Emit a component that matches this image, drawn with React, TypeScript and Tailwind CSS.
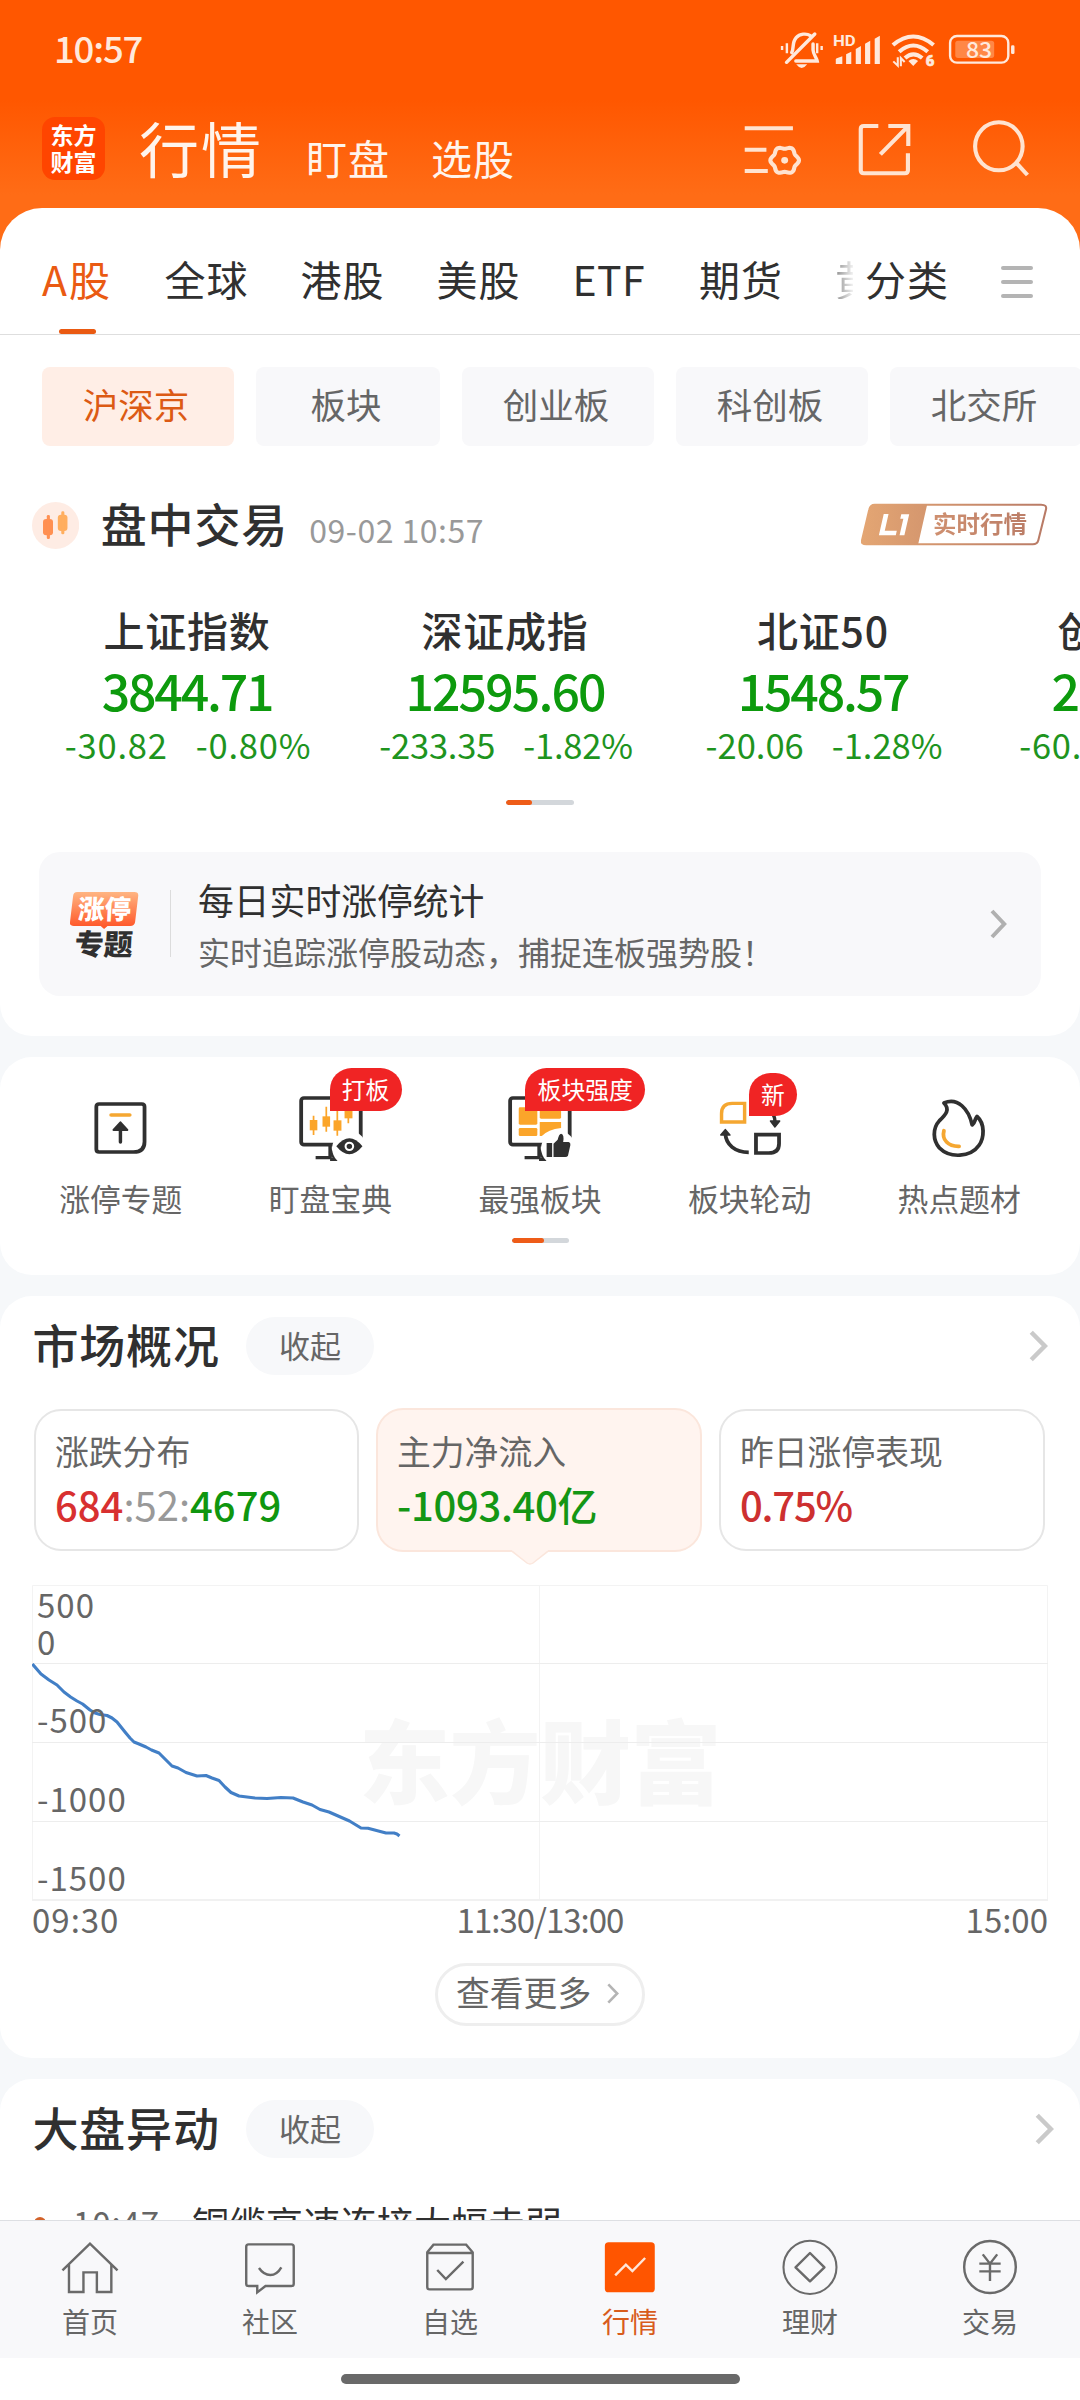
import React from "react";

const INK = "#303030";
const AMBER = "#f5a731";

type BoxProps = { x: number; y: number; w: number; h: number; className?: string; children: React.ReactNode };

/* Icons are drawn on a grid of 2.904 units per pixel across and 3 units per pixel down. */
function Glyph({ x, y, w, h, className = "", children }: BoxProps) {
  return (
    <svg
      className={"block shrink-0 " + className}
      width={w / 2.904}
      height={h / 3}
      viewBox={`${x} ${y} ${w} ${h}`}
      preserveAspectRatio="none"
      fill="none"
    >
      {children}
    </svg>
  );
}

const gearPath =
  Array.from({ length: 73 }, (_, i) => {
    const a = (i * 5 * Math.PI) / 180;
    const r = 38 + 3.5 * Math.cos(6 * a);
    return `${i ? "L" : "M"}${(711 + r * Math.cos(a)).toFixed(1)} ${(479 + r * Math.sin(a)).toFixed(1)}`;
  }).join("") + "Z";

function StatusBar() {
  return (
    <div className="flex h-[100px] items-start pl-[54px] text-[#ffe9dc]">
      <span className="mt-[30px] w-[726px] text-[36.5px] leading-none font-medium tracking-[-1.2px]">10:57</span>
      <Glyph x={695} y={90} w={690} h={120} className="mt-[30px]">
        <g stroke="#ffe9dc" strokeWidth="10" strokeLinecap="round">
          <path d="M729 158C736 146 729 128 742 113C752 101 772 99 783 107" />
          <path d="M791 132V150C792 165 801 172 803 183H741" />
          <path d="M796 102L714 187" />
        </g>
        <path d="M742 193H774Q766 204 758 204Q750 204 742 193Z" fill="#ffe9dc" />
        <path d="M701 138V150M715 130V160M803 130V160M816 138V150" stroke="#ffe9dc" strokeWidth="7" />
        <g fill="#ffe9dc">
          <text x="849" y="137" fontSize="44" fontWeight="700" textLength="66" lengthAdjust="spacingAndGlyphs" fontFamily="Roboto, sans-serif">
            HD
          </text>
          <path d="M857 192V178Q857 176 860 175L876 169V192ZM887 192V163L902 155V192ZM915 192V147L930 138V192ZM942 192V131L957 122V192ZM970 192V116L985 107V192Z" />
        </g>
        <g stroke="#ffe9dc" strokeWidth="12">
          <path d="M1023 135Q1082 84 1141 135" />
          <path d="M1041 155Q1082 118 1124 155" />
          <path d="M1058 174Q1082 152 1108 174" />
        </g>
        <path d="M1068 183Q1082 171 1096 183L1082 198Z" fill="#ffe9dc" />
        <path d="M1037 172V197L1024 184M1046 199V174L1057 186" stroke="#ffe9dc" strokeWidth="6" />
        <text x="1118" y="199" fontSize="43" fontWeight="900" fill="#ffe9dc" stroke="#ffe9dc" strokeWidth="2" fontFamily="Roboto, sans-serif">
          6
        </text>
        <rect x="1189" y="108" width="169" height="80" rx="20" stroke="#ffe9dc" strokeWidth="7" />
        <rect x="1204" y="122" width="113" height="52" rx="8" fill="#ff8746" />
        <rect x="1366" y="136" width="10" height="26" rx="4" fill="#ffe9dc" />
        <text x="1273" y="174" textAnchor="middle" fontSize="67" fontWeight="500" fill="#ffe9dc" fontFamily="Noto Sans CJK SC, sans-serif">
          83
        </text>
      </Glyph>
    </div>
  );
}

function Header() {
  return (
    <header className="h-[250px] bg-[linear-gradient(#ff5700_0,#ff5700_100px,#ff6c16_195px,#ff6c16_100%)]">
      <StatusBar />
      <div className="flex items-start pl-[42px] text-[#fff4ec]">
        <div className="mt-[17px] flex h-[63px] w-[63px] flex-col items-center justify-center rounded-[13px] bg-[#ff4500] pb-[2px] text-[23px] leading-[27px] font-bold text-white">
          <span>东方</span>
          <span>财富</span>
        </div>
        <span className="mt-[17px] ml-[34px] w-[167px] text-[60px] leading-none tracking-[2px]">行情</span>
        <span className="mt-[37px] w-[125px] text-[41px] leading-none tracking-[1px]">盯盘</span>
        <span className="mt-[37px] w-[312px] text-[41px] leading-none tracking-[1px]">选股</span>
        <Glyph x={590} y={370} w={175} h={160} className="mt-[24px]">
          <path d="M595 383H735M595 447H658M595 511H662" stroke="#ffe3d0" strokeWidth="12" />
          <path d={gearPath} stroke="#ffe3d0" strokeWidth="12" />
          <circle cx="711" cy="479" r="10" fill="#ffe3d0" />
        </Glyph>
        <Glyph x={925} y={364} w={158} h={166} className="mt-[22px] ml-[55px]">
          <path
            d="M984 376H942Q933 376 933 385V509Q933 518 942 518H1061Q1070 518 1070 509V458M1013 376H1071V436M1070 377L990 461"
            stroke="#ffe3d0"
            strokeWidth="12"
          />
        </Glyph>
        <Glyph x={1253} y={360} w={170} h={172} className="mt-[20px] ml-[59px]">
          <ellipse cx="1331" cy="439" rx="69" ry="72" stroke="#ffe3d0" strokeWidth="12" />
          <path d="M1381 488L1414 525" stroke="#ffe3d0" strokeWidth="12" />
        </Glyph>
      </div>
    </header>
  );
}

const tabs = ["全球", "港股", "美股"];

function Tabs() {
  return (
    <div className="flex h-[127px] items-start border-b border-[#dedede] pt-[50px] pl-[42px] text-[41px] leading-none tracking-[1px] whitespace-nowrap text-[#303030]">
      <div className="flex h-[76px] w-[122.5px] flex-col justify-between text-[#ea5a12]">
        <span className="tracking-[2px]">A股</span>
        <span className="ml-[17px] h-[5px] w-[37px] rounded-full bg-[#ea5a12]" />
      </div>
      {tabs.map((t) => (
        <span key={t} className="w-[136px]">
          {t}
        </span>
      ))}
      <span className="w-[126.5px] tracking-[0.4px]">ETF</span>
      <span className="w-[136px]">期货</span>
      <span className="w-[18px] overflow-hidden bg-[linear-gradient(90deg,#8c8c8c,#f2f2f2)] bg-clip-text text-transparent">黄</span>
      <span className="ml-[12px] w-[136px]">分类</span>
      <span className="mt-[8px] flex flex-col gap-[9.5px]">
        <i className="h-[4.4px] w-[32px] rounded-full bg-[#b4b4b4]" />
        <i className="h-[4.4px] w-[32px] rounded-full bg-[#b4b4b4]" />
        <i className="h-[4.4px] w-[32px] rounded-full bg-[#b4b4b4]" />
      </span>
    </div>
  );
}

function Chips() {
  const base = "flex h-[79px] shrink-0 items-center justify-center rounded-[8px] pr-[4px] pb-[5px] text-[35.5px] leading-none ";
  return (
    <div className="flex gap-[22px] overflow-hidden pt-[32px] pl-[42px]">
      <span className={base + "w-[192px] bg-[#ffeee6] text-[#dc5a14]"}>沪深京</span>
      <span className={base + "w-[184px] bg-[#f8f8fa] text-[#666]"}>板块</span>
      <span className={base + "w-[192px] bg-[#f8f8fa] text-[#666]"}>创业板</span>
      <span className={base + "w-[192px] bg-[#f8f8fa] text-[#666]"}>科创板</span>
      <span className={base + "w-[192px] bg-[#f8f8fa] text-[#666]"}>北交所</span>
    </div>
  );
}

function SessionRow() {
  return (
    <div className="mt-[55px] flex h-[49px] items-start pl-[32px]">
      <Glyph x={93} y={456} w={137} h={141} className="mt-[1px]">
        <ellipse cx="161.5" cy="526.5" rx="68.5" ry="70.5" fill="#feece4" />
        <rect x="125" y="507" width="29" height="49" rx="9" fill="#ff9052" />
        <rect x="136" y="495" width="9" height="72" rx="4" fill="#ff9052" />
        <rect x="168" y="494" width="28" height="49" rx="9" fill="#ffae5e" />
        <rect x="178" y="484" width="9" height="69" rx="4" fill="#ffae5e" />
      </Glyph>
      <span className="-mt-[2px] ml-[21.5px] text-[46px] leading-none font-medium tracking-[0.9px] text-[#303030]">盘中交易</span>
      <span className="mt-[12px] ml-[21px] w-[180px] text-[32px] leading-none tracking-[0.5px] text-[#999]">09-02 10:57</span>
      <div className="relative mt-[2px] ml-auto mr-[32px]">
        <Glyph x={935} y={460} w={543} h={130}>
          <defs>
            <linearGradient id="tag" gradientUnits="userSpaceOnUse" x1="935" x2="1475" y1="0" y2="0">
              <stop offset="0" stopColor="#e4a673" />
              <stop offset="1" stopColor="#b87a66" />
            </linearGradient>
          </defs>
          <path
            d="M975 465H1458Q1476 465 1472 480L1450 572Q1447 584 1434 584H950Q935 584 938 572L959 480Q962 465 975 465Z"
            stroke="url(#tag)"
            strokeWidth="6"
          />
          <path d="M975 465H1127L1101 584H950Q935 584 938 572L959 480Q962 465 975 465Z" fill="url(#tag)" />
          <path d="M1001 493L987 557H1036L1039 543H1004L1015 493ZM1052 494H1075L1061 557H1047L1058 507H1049Z" fill="#fff" />
        </Glyph>
        <span className="absolute top-[9px] left-[72px] bg-[linear-gradient(90deg,#cf9070,#bb7d67)] bg-clip-text text-[23.5px] leading-none font-bold whitespace-nowrap text-transparent">
          实时行情
        </span>
      </div>
    </div>
  );
}

const indices = [
  { name: "上证指数", value: "3844.71", diff: "-30.82", pct: "-0.80%", fit: "tracking-[-2.2px]", fit2: "tracking-[0.8px]" },
  { name: "深证成指", value: "12595.60", diff: "-233.35", pct: "-1.82%", fit: "tracking-[-1.9px]", fit2: "tracking-[-0.2px]" },
  { name: "北证50", value: "1548.57", diff: "-20.06", pct: "-1.28%", fit: "tracking-[-2.2px]", fit2: "tracking-[0px]" },
  { name: "创业板指", value: "2896.18", diff: "-60.49", pct: "-2.05%", fit: "tracking-[-1px]", fit2: "tracking-[0.7px]" },
];

function Indices() {
  return (
    <div className="mt-[59px] flex overflow-hidden pl-[28px]">
      {indices.map((it) => (
        <div key={it.name} className="flex w-[318px] shrink-0 flex-col items-center whitespace-nowrap">
          <span className="text-[41px] leading-none font-medium tracking-[0.8px] text-[#303030]">{it.name}</span>
          <span className={"mt-[14px] text-[50px] leading-none font-medium text-[#0d9a0d] " + it.fit}>{it.value}</span>
          <span className={"mt-[13px] ml-[2px] flex gap-[28px] text-[34.5px] leading-none text-[#1e941e] " + it.fit2}>
            <span>{it.diff}</span>
            <span>{it.pct}</span>
          </span>
        </div>
      ))}
    </div>
  );
}

function Chevron({ w, h, color, sw, className = "" }: { w: number; h: number; color: string; sw: number; className?: string }) {
  return (
    <svg className={"block shrink-0 " + className} width={w} height={h} viewBox={`0 0 ${w} ${h}`} fill="none">
      <path d={`M${sw / 2} ${sw / 2}L${w - sw * 0.7} ${h / 2}L${sw / 2} ${h - sw / 2}`} stroke={color} strokeWidth={sw} />
    </svg>
  );
}

function TopicCard() {
  return (
    <div className="mx-[39px] mt-[47px] flex h-[144px] items-start rounded-[21px] bg-[#f8f8fa]">
      <div className="relative mt-[40px] ml-[31px] w-[68px]">
        <Glyph x={203} y={190} w={199} h={111}>
          <defs>
            <linearGradient id="topic" x1="0" x2="0" y1="0" y2="1">
              <stop offset="0" stopColor="#ffb582" />
              <stop offset="1" stopColor="#ff5224" />
            </linearGradient>
          </defs>
          <path
            d="M224 190H390Q403 190 401 203L392 281Q390 292 378 292H312L302 301L292 292H214Q201 292 203 280L212 202Q213 190 224 190Z"
            fill="url(#topic)"
          />
        </Glyph>
        <span className="absolute top-[3px] left-[8px] -skew-x-3 text-[26.5px] leading-none font-black whitespace-nowrap text-white">涨停</span>
        <span className="absolute top-[36px] left-[5px] -skew-x-3 text-[29px] leading-none font-black whitespace-nowrap text-[#303030]">
          专题
        </span>
      </div>
      <span className="mt-[38px] ml-[32px] h-[67px] w-px bg-[#dcdcdc]" />
      <div className="mt-[30px] ml-[27px] flex grow flex-col whitespace-nowrap">
        <span className="text-[35.8px] leading-none text-[#303030]">每日实时涨停统计</span>
        <span className="mt-[18px] text-[32px] leading-none text-[#666]">实时追踪涨停股动态，捕捉连板强势股！</span>
      </div>
      <Chevron w={17} h={30} color="#b0b0b0" sw={4} className="mt-[57px] mr-[34px]" />
    </div>
  );
}

function Pager({ outer, inner }: { outer: string; inner: string }) {
  return (
    <div className={"mx-auto h-[5px] overflow-hidden rounded-full bg-[#d3d7db] " + outer}>
      <div className={"h-full rounded-full bg-[#ee5c18] " + inner} />
    </div>
  );
}

function MonitorFrame({ dx }: { dx: number }) {
  return (
    <g transform={`translate(${dx} 0)`}>
      <rect x="873" y="805" width="173" height="140" rx="8" stroke={INK} strokeWidth="11" />
      <path d="M957 945V984H915M957 960L972 989H957" stroke={INK} strokeWidth="10" />
      <ellipse cx="1013" cy="956" rx="50" ry="52" fill="#fff" />
    </g>
  );
}

const toolIcons = [
  <Glyph key="a" x={250} y={790} w={200} h={210}>
    <path d="M288 823H412Q420 823 420 831V936Q420 967 388 967H288Q280 967 280 959V831Q280 823 288 823Z" stroke={INK} strokeWidth="11" />
    <path d="M323 856H377" stroke={AMBER} strokeWidth="11" strokeLinecap="round" />
    <path d="M350 895V937" stroke={INK} strokeWidth="10" strokeLinecap="round" />
    <path d="M350 878L370 901H330Z" fill={INK} stroke={INK} strokeWidth="6" strokeLinejoin="round" />
  </Glyph>,
  <Glyph key="b" x={858} y={790} w={200} h={210}>
    <MonitorFrame dx={0} />
    <g fill="#fba52a">
      <rect x="898" y="871" width="22" height="31" />
      <rect x="935" y="860" width="22" height="31" />
      <rect x="967" y="872" width="23" height="31" />
      <rect x="999" y="835" width="23" height="31" />
    </g>
    <path d="M909 858V916M946 831V906M978 840V918M1010 825V881" stroke="#fba52a" strokeWidth="5" />
    <path d="M975 950Q1013 902 1051 950Q1013 998 975 950Z" fill={INK} />
    <circle cx="1013" cy="950" r="11" stroke="#fff" strokeWidth="6" />
  </Glyph>,
  <Glyph key="c" x={1468} y={790} w={200} h={210}>
    <MonitorFrame dx={607} />
    <g fill="#fba52a">
      <rect x="1505" y="833" width="54" height="52" rx="4" />
      <rect x="1505" y="895" width="54" height="24" rx="4" />
      <rect x="1566" y="833" width="62" height="34" rx="4" />
      <path d="M1566 877H1628V895Q1590 900 1572 919H1566Z" />
    </g>
    <path
      d="M1586 940H1602V982H1586ZM1606 942L1618 930Q1622 912 1628 912Q1638 914 1634 937H1650Q1656 938 1655 946L1648 978Q1646 982 1640 982H1606Z"
      fill={INK}
    />
  </Glyph>,
  <Glyph key="d" x={510} y={790} w={200} h={210}>
    <path d="M596 821V877H529V852Q529 821 560 821Z" stroke={AMBER} strokeWidth="10" />
    <path d="M629 915H696V942Q696 970 666 970H629Z" stroke={INK} strokeWidth="11" />
    <path d="M540 912C542 945 568 968 608 968" stroke={INK} strokeWidth="11" />
    <path d="M540 900L553 916H527Z" fill={INK} stroke={INK} strokeWidth="5" strokeLinejoin="round" />
    <path d="M672 845Q684 860 684 874" stroke={INK} strokeWidth="10" />
    <path d="M684 892L698 874H671Z" fill={INK} stroke={INK} strokeWidth="4" strokeLinejoin="round" />
  </Glyph>,
  <Glyph key="e" x={1118} y={790} w={200} h={210}>
    <path
      d="M1173 820C1213 802 1245 838 1255 886C1264 880 1262 868 1269 860C1293 882 1290 925 1275 947C1250 984 1190 986 1160 955C1141 932 1139 897 1160 873C1178 855 1192 840 1173 820Z"
      stroke={INK}
      strokeWidth="11"
      strokeLinejoin="round"
    />
    <path d="M1173 903C1166 930 1186 951 1217 950" stroke={AMBER} strokeWidth="11" strokeLinecap="round" />
  </Glyph>,
];

const tools = [
  { name: "涨停专题" },
  { name: "盯盘宝典", tag: "打板", pos: "top-[11px] left-[104px] w-[72px]" },
  { name: "最强板块", tag: "板块强度", pos: "top-[11px] left-[90px] w-[120px]" },
  { name: "板块轮动", tag: "新", pos: "top-[16px] left-[104px] w-[48px]" },
  { name: "热点题材" },
];

function Tools() {
  return (
    <section className="mt-[21px] h-[218px] rounded-[32px] bg-white">
      <div className="grid h-[181px] grid-cols-5 px-[16px]">
        {tools.map((t, i) => (
          <div key={t.name} className="relative flex flex-col items-center pt-[36px]">
            {toolIcons[i]}
            <span className="mt-[20px] text-[30.8px] leading-none whitespace-nowrap text-[#666]">{t.name}</span>
            {t.tag && (
              <span
                className={
                  "absolute flex h-[43px] items-center justify-center rounded-[21.5px] rounded-bl-none bg-[#f02424] pb-[2px] text-[23.8px] leading-none whitespace-nowrap text-white " +
                  t.pos
                }
              >
                {t.tag}
              </span>
            )}
          </div>
        ))}
      </div>
      <Pager outer="w-[57px]" inner="w-[32px]" />
    </section>
  );
}

function SectionTitle({ title, right }: { title: string; right: string }) {
  return (
    <div className="flex h-[58px] items-center pl-[32.5px]">
      <span className="w-[213.5px] pb-[7px] text-[46px] leading-none font-medium tracking-[0.8px] text-[#303030]">{title}</span>
      <span className="flex h-[58px] w-[128px] items-center justify-center rounded-full bg-[#f7f8fa] pb-[4px] text-[31px] leading-none text-[#666]">
        收起
      </span>
      <Chevron w={19} h={32} color="#cacaca" sw={4.5} className={"ml-auto " + right} />
    </div>
  );
}

const flow: [number, number][] = [
  [32.4, 1664], [41, 1674], [49, 1680], [57, 1685], [64, 1692], [70.6, 1697], [77, 1701], [82.6, 1704], [90, 1710], [95, 1713], [100, 1714.5],
  [107, 1715.5], [112, 1718], [117, 1722], [125, 1732], [130, 1738], [134, 1742], [139, 1744], [146, 1747], [151.5, 1750], [159, 1753], [166, 1760],
  [172, 1766], [178, 1768], [186, 1772.5], [197, 1776], [206, 1775.5], [212, 1778], [219, 1780.5], [225, 1787], [231, 1792.5], [239, 1796], [255, 1798],
  [267, 1798.5], [281, 1797.5], [293, 1798], [303, 1802], [312, 1805], [320, 1809.5], [329, 1812], [349.5, 1821], [361, 1828], [368, 1828.3],
  [386, 1833], [394, 1833], [397, 1834], [399.5, 1836],
];

const yLabels = [
  { t: "500", c: "top-[3px]" },
  { t: "0", c: "top-[40px]" },
  { t: "-500", c: "top-[118px]" },
  { t: "-1000", c: "top-[197px]" },
  { t: "-1500", c: "top-[276px]" },
];

function FlowChart() {
  return (
    <div className="mx-[32px] mt-[33px]">
      <div className="relative h-[316px]">
        <span className="absolute top-[127px] left-[327px] text-[91px] leading-none font-black tracking-[-0.5px] whitespace-nowrap text-[#f7f7f7]">
          东方财富
        </span>
        <svg className="absolute inset-0" width="1016" height="316" viewBox="32 1585 1016 316" fill="none">
          <path d="M32.5 1900V1585.5H1047.5V1900M539.5 1585V1900" stroke="#f3f3f3" strokeWidth="1" />
          <path d="M32 1663.5H1048M32 1742.5H1048M32 1821.5H1048" stroke="#ededed" strokeWidth="1.2" />
          <path d="M32 1900H1048" stroke="#f1f1f1" strokeWidth="2" />
          <polyline points={flow.map((p) => p.join(",")).join(" ")} stroke="#427fc6" strokeWidth="3.1" strokeLinejoin="round" />
        </svg>
        {yLabels.map((l) => (
          <span key={l.t} className={"absolute left-[5px] text-[33px] leading-none tracking-[1px] text-[#666] " + l.c}>
            {l.t}
          </span>
        ))}
      </div>
      <div className="mt-[2px] flex justify-between text-[33px] leading-none text-[#666]">
        <span className="w-[170px] tracking-[1px]">09:30</span>
        <span className="tracking-[-1px]">11:30/13:00</span>
        <span className="w-[170px] text-right">15:00</span>
      </div>
    </div>
  );
}

function Overview() {
  const label = "text-[33.8px] leading-none text-[#666]";
  const value = "mt-[16px] text-[40px] leading-none font-medium ";
  return (
    <section className="mt-[21px] h-[762px] rounded-[32px] bg-white pt-[21px]">
      <SectionTitle title="市场概况" right="mr-[32px]" />
      <div className="mt-[33px] flex gap-[17px] pl-[34px] whitespace-nowrap">
        <div className="mt-px flex h-[142px] w-[325px] flex-col rounded-[27px] border-2 border-[#e6e6e6] pt-[23px] pl-[19px]">
          <span className={label}>涨跌分布</span>
          <span className={value}>
            <b className="font-medium text-[#d83030]">684</b>
            <b className="font-normal text-[#999]">:52:</b>
            <b className="font-medium text-[#0f960f]">4679</b>
          </span>
        </div>
        <div className="relative flex h-[144px] w-[326px] flex-col rounded-[27px] border-2 border-[#fbe6dc] bg-[#fff4ef] pt-[24px] pl-[19px]">
          <span className={label}>主力净流入</span>
          <span className={value + "tracking-[-0.3px] text-[#149614]"}>-1093.40亿</span>
          <svg className="absolute top-[140px] left-[134px]" width="36" height="16" viewBox="0 0 36 16">
            <path d="M0 1.2L15 13Q18 15 21 13L36 1.2V0H0Z" fill="#fff4ef" />
            <path d="M0 1.2L15 13Q18 15 21 13L36 1.2" fill="none" stroke="#fbe6dc" strokeWidth="1.5" />
          </svg>
        </div>
        <div className="mt-px flex h-[142px] w-[326px] flex-col rounded-[27px] border-2 border-[#e6e6e6] pt-[23px] pl-[19px]">
          <span className={label}>昨日涨停表现</span>
          <span className={value + "tracking-[-1.2px] text-[#cd3030]"}>0.75%</span>
        </div>
      </div>
      <FlowChart />
      <div className="mx-auto mt-[27px] flex h-[63px] w-[210px] items-start rounded-full border-[3px] border-[#eeeeee] pt-[9px] pl-[18px]">
        <span className="text-[33.8px] leading-none whitespace-nowrap text-[#666]">查看更多</span>
        <Chevron w={12} h={21} color="#b4b4b4" sw={2.6} className="mt-[8px] ml-[16px]" />
      </div>
    </section>
  );
}

function Moves() {
  return (
    <section className="mt-[21px] h-[141px] overflow-hidden rounded-t-[32px] bg-white pt-[21px]">
      <SectionTitle title="大盘异动" right="mr-[26px]" />
      <div className="mt-[45px] flex items-start pl-[34px] whitespace-nowrap">
        <span className="mt-[14px] h-[12px] w-[12px] rounded-full bg-[#d2622a]" />
        <span className="mt-[3px] ml-[27px] w-[119px] text-[33px] leading-none tracking-[0.9px] text-[#666]">10:47</span>
        <span className="mt-[2px] text-[37px] leading-none text-[#303030]">铜缆高速连接大幅走弱</span>
      </div>
    </section>
  );
}

const G = "#6a6a6a";
const navItems = [
  {
    name: "首页",
    icon: (
      <Glyph x={172} y={536} w={180} h={170}>
        <path d="M182 630L262 550L342 630M201 613V695H243V636H282V695H324V613" stroke={G} strokeWidth="7" />
      </Glyph>
    ),
  },
  {
    name: "社区",
    icon: (
      <Glyph x={694} y={536} w={180} h={170}>
        <path d="M722 552H846Q853 552 853 559V670Q853 677 846 677H771L747 696V677H722Q715 677 715 670V559Q715 552 722 552Z" stroke={G} strokeWidth="7" />
        <path d="M752 623Q766 644 785 644Q804 644 817 621" stroke={G} strokeWidth="7" />
      </Glyph>
    ),
  },
  {
    name: "自选",
    icon: (
      <Glyph x={1216} y={536} w={180} h={170}>
        <path d="M1240 576L1258 553H1353L1372 576V680Q1372 687 1365 687H1247Q1240 687 1240 680ZM1240 578H1372" stroke={G} strokeWidth="7" />
        <path d="M1269 629L1294 656L1345 604" stroke={G} strokeWidth="7" />
      </Glyph>
    ),
  },
  {
    name: "行情",
    active: true,
    icon: (
      <Glyph x={172} y={536} w={180} h={170}>
        <rect x="189" y="546" width="145" height="150" rx="11" fill="#ff5500" />
        <path d="M219 645L250 613L269 632L306 593" stroke="#ffe6d8" strokeWidth="7" />
      </Glyph>
    ),
  },
  {
    name: "理财",
    icon: (
      <Glyph x={694} y={536} w={180} h={170}>
        <ellipse cx="784" cy="621" rx="77" ry="80" stroke={G} strokeWidth="6" />
        <path d="M784 578L826 621L784 663L742 621Z" stroke={G} strokeWidth="7" strokeLinejoin="round" />
      </Glyph>
    ),
  },
  {
    name: "交易",
    icon: (
      <Glyph x={1216} y={536} w={180} h={170}>
        <ellipse cx="1306" cy="620" rx="75" ry="78" stroke={G} strokeWidth="7" />
        <path d="M1285 582L1306 610L1327 582M1306 608V662M1275 610H1337M1275 633H1337" stroke={G} strokeWidth="7" />
      </Glyph>
    ),
  },
];

function BottomNav() {
  return (
    <nav className="h-[180px] bg-white">
      <div className="grid h-[138px] grid-cols-6 border-t border-[#dddfe3] bg-[#f8f8fa]">
        {navItems.map((n) => (
          <div key={n.name} className={"flex flex-col items-center pt-[18px] " + (n.active ? "text-[#d85c1c]" : "text-[#666]")}>
            {n.icon}
            <span className="mt-[11px] text-[28px] leading-none">{n.name}</span>
          </div>
        ))}
      </div>
      <div className="mx-auto mt-[16px] h-[10px] w-[399px] rounded-full bg-[#696969]" />
    </nav>
  );
}

export default function App() {
  return (
    <div className="h-[2400px] w-[1080px] overflow-hidden bg-[#f6f8fa] font-['Noto_Sans_CJK_SC',sans-serif]">
      <Header />
      <main>
        <section className="-mt-[42px] h-[828px] rounded-t-[42px] rounded-b-[32px] bg-white">
          <Tabs />
          <Chips />
          <SessionRow />
          <Indices />
          <div className="mt-[38px]">
            <Pager outer="w-[68px]" inner="w-[26px]" />
          </div>
          <TopicCard />
        </section>
        <Tools />
        <Overview />
        <Moves />
      </main>
      <BottomNav />
    </div>
  );
}
